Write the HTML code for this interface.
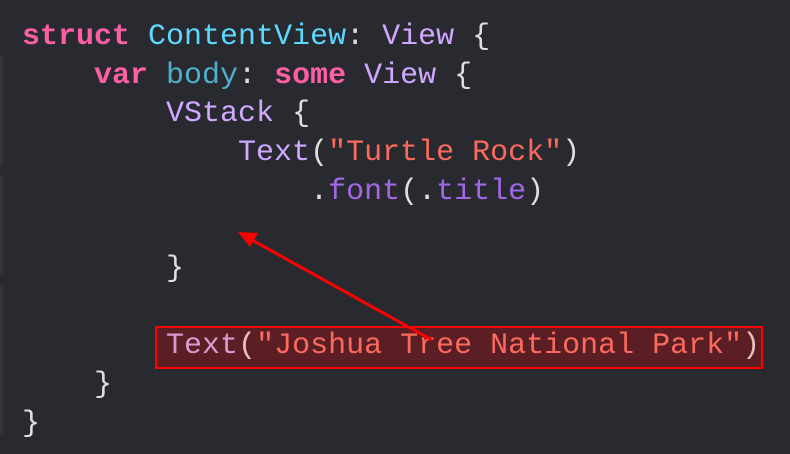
<!DOCTYPE html>
<html><head><style>
html,body{margin:0;padding:0;background:#292a30;width:790px;height:454px;overflow:hidden}
pre{position:absolute;left:22px;top:18px;margin:0;font-family:"Liberation Mono",monospace;font-size:30px;line-height:38.65px;color:#dfdfe0;letter-spacing:0}
.k{color:#fc5fa3;font-weight:bold}.t{color:#5dd8ff}.v{color:#d0a8ff}.b{color:#4eb0cc}.s{color:#fc6a5d}.m{color:#a167e6}
.box{position:absolute;left:155px;top:326px;width:604px;height:39px;border:2px solid #ff0000;background:#5a1e24}
.gut{position:absolute;left:0;width:3px;background:#34353a}
</style></head><body>
<div class="gut" style="top:55px;height:110px"></div>
<div class="gut" style="top:175px;height:100px"></div>
<div class="gut" style="top:285px;height:150px"></div>
<div class="box"></div>
<pre><span class="k">struct</span> <span class="t">ContentView</span>: <span class="v">View</span> {
    <span class="k">var</span> <span class="b">body</span>: <span class="k">some</span> <span class="v">View</span> {
        <span class="v">VStack</span> {
            <span class="v">Text</span>(<span class="s">"Turtle Rock"</span>)
                .<span class="m">font</span>(.<span class="m">title</span>)

        }

        <span class="v" style="color:#d89ad0">Text</span><span style="color:#e8c0c0">(</span><span class="s">"Joshua Tree National Park"</span><span style="color:#e8c0c0">)</span>
    }
}</pre>
<svg width="790" height="454" style="position:absolute;left:0;top:0">
<line x1="432" y1="340" x2="252" y2="240" stroke="#ff0000" stroke-width="3"/>
<polygon points="238,232 258,233 250,247" fill="#ff0000"/>
</svg>
</body></html>
